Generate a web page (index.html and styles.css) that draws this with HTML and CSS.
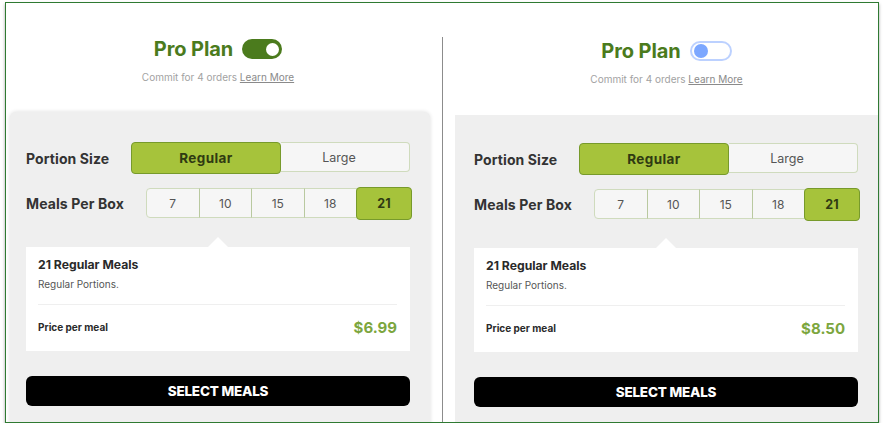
FILE: index.html
```html
<!DOCTYPE html>
<html lang="en">
<head>
<meta charset="utf-8">
<title>Pro Plan</title>
<link rel="stylesheet" href="styles.css">
</head>
<body>
<div class="frame">
  <section class="plan plan-left">
    <header class="plan-head">
      <div class="title-row">
        <h2 class="title">Pro Plan</h2>
        <span class="toggle toggle-on"><span class="knob"></span></span>
      </div>
      <p class="sub">Commit for 4 orders <a class="learn">Learn More</a></p>
    </header>
    <div class="card">
      <div class="opt-row">
        <span class="opt-label label-portion">Portion Size</span>
        <div class="seg seg-portion">
          <button class="seg-btn portion-reg sel">Regular</button>
          <button class="seg-btn portion-large">Large</button>
        </div>
      </div>
      <div class="opt-row row-meals">
        <span class="opt-label label-meals">Meals Per Box</span>
        <div class="seg seg-meals">
          <button class="meal-btn">7</button>
          <button class="meal-btn">10</button>
          <button class="meal-btn">15</button>
          <button class="meal-btn">18</button>
          <button class="meal-btn sel">21</button>
        </div>
      </div>
      <div class="info">
        <div class="info-title">21 Regular Meals</div>
        <div class="info-sub">Regular Portions.</div>
        <hr class="info-rule">
        <div class="price-row">
          <span class="price-label">Price per meal</span>
          <span class="price">$6.99</span>
        </div>
      </div>
      <button class="cta">SELECT MEALS</button>
    </div>
  </section>

  <section class="plan plan-right">
    <header class="plan-head">
      <div class="title-row">
        <h2 class="title">Pro Plan</h2>
        <span class="toggle toggle-off"><span class="knob"></span></span>
      </div>
      <p class="sub">Commit for 4 orders <a class="learn">Learn More</a></p>
    </header>
    <div class="card">
      <div class="opt-row">
        <span class="opt-label label-portion">Portion Size</span>
        <div class="seg seg-portion">
          <button class="seg-btn portion-reg sel">Regular</button>
          <button class="seg-btn portion-large">Large</button>
        </div>
      </div>
      <div class="opt-row row-meals">
        <span class="opt-label label-meals">Meals Per Box</span>
        <div class="seg seg-meals">
          <button class="meal-btn">7</button>
          <button class="meal-btn">10</button>
          <button class="meal-btn">15</button>
          <button class="meal-btn">18</button>
          <button class="meal-btn sel">21</button>
        </div>
      </div>
      <div class="info">
        <div class="info-title">21 Regular Meals</div>
        <div class="info-sub">Regular Portions.</div>
        <hr class="info-rule">
        <div class="price-row">
          <span class="price-label">Price per meal</span>
          <span class="price">$8.50</span>
        </div>
      </div>
      <button class="cta">SELECT MEALS</button>
    </div>
  </section>
</div>
</body>
</html>
```

FILE: styles.css
```css
* { box-sizing: border-box; }

html, body {
  margin: 0;
  padding: 0;
  background: #ffffff;
}

body {
  font-family: Inter, "Noto Sans", "Liberation Sans", sans-serif;
  color: #2b2b2b;
  overflow: hidden;
}

.frame {
  margin: 2px 0 0 5px;
  width: 874px;
  height: 421px;
  border: 1px solid #2f7a32;
  box-shadow: 0 2px 3px rgba(0, 0, 0, 0.35);
  background: #ffffff;
  display: flex;
  overflow: hidden;
}

.plan {
  display: flex;
  flex-direction: column;
}

.plan-left {
  width: 436px;
  flex: none;
}

.plan-right {
  flex: 1;
  margin-top: 34px;
  border-left: 1px solid #8c8c8c;
}

/* header */
.plan-head {
  text-align: center;
}

.plan-left .plan-head {
  padding: 32px 12px 0 0;
}

.plan-right .plan-head {
  padding: 0 0 0 12px;
}

.title-row {
  display: flex;
  justify-content: center;
  align-items: center;
  gap: 9px;
  height: 28px;
}

.title {
  margin: 0;
  font-size: 20px;
  font-weight: 700;
  color: #4b7b1d;
  letter-spacing: -0.1px;
}

.toggle {
  display: flex;
  align-items: center;
  width: 40px;
  height: 20px;
  border-radius: 10px;
  padding: 0 3px;
}

.toggle .knob {
  width: 13px;
  height: 13px;
  border-radius: 50%;
}

.toggle-on {
  background: #4b7b1d;
  justify-content: flex-end;
}

.toggle-on .knob {
  background: #ffffff;
}

.toggle-off {
  width: 42px;
  background: #ffffff;
  border: 2px solid #bcd1ff;
  justify-content: flex-start;
  padding: 0 2px;
}

.toggle-off .knob {
  background: #7ca7ff;
  width: 14px;
  height: 14px;
}

.sub {
  margin: 7px 0 0;
  height: 14px;
  line-height: 14px;
  font-size: 10px;
  color: #a2a2a2;
}

.learn {
  color: #8a8a8a;
  text-decoration: underline;
}

/* card */
.card {
  background: #efefef;
  display: flex;
  flex-direction: column;
  flex: 1;
}

.plan-left .card {
  margin: 28px 12px 0 4px;
  padding: 30px 20px 20px 16px;
  border-radius: 6px 6px 0 0;
  box-shadow: 0 0 4px rgba(0, 0, 0, 0.14);
}

.plan-right .card {
  margin: 29px 0 0 12px;
  padding: 28px 20px 20px 19px;
}

.opt-row {
  display: flex;
  align-items: center;
  height: 32px;
}

.row-meals {
  margin-top: 14px;
  height: 30px;
}

.opt-label {
  flex: none;
  font-size: 14px;
  font-weight: 700;
  color: #333333;
  letter-spacing: 0.1px;
}

.label-portion { width: 105px; }
.label-meals { width: 120px; }

.seg {
  flex: 1;
  display: flex;
  height: 100%;
}

button {
  font-family: inherit;
  cursor: pointer;
}

.seg-btn {
  height: 30px;
  border: 1px solid #cfdbbd;
  background: #f6f6f6;
  font-size: 12.5px;
  color: #555555;
}

.portion-reg {
  flex: 0 0 150px;
}

.portion-large {
  flex: 1;
  border-left: 0;
  border-radius: 0 4px 4px 0;
  padding: 0 12px 0 0;
}

.seg-btn.sel {
  height: 32px;
  background: #a6c33b;
  border: 1px solid #779a2b;
  border-radius: 4px;
  font-size: 13.5px;
  letter-spacing: 0.4px;
  font-weight: 700;
  color: #2f3a12;
}

.seg-meals {
  align-items: center;
}

.meal-btn {
  flex: 1;
  height: 30px;
  border: 1px solid #cfdbbd;
  border-left-color: #b9c9a0;
  background: #f6f6f6;
  font-size: 12px;
  color: #555555;
  padding: 0;
}

.meal-btn:first-child {
  border-left-color: #cfdbbd;
  border-radius: 4px 0 0 4px;
}

.meal-btn + .meal-btn {
  margin-left: -1px;
}

.meal-btn.sel {
  flex: 0 0 56px;
  height: 33px;
  margin-right: -2px;
  background: #a6c33b;
  border: 1px solid #779a2b;
  border-radius: 4px;
  font-size: 12.5px;
  font-weight: 700;
  color: #2f3a12;
  position: relative;
  z-index: 1;
}

/* info */
.info {
  position: relative;
  margin-top: 29px;
  background: #ffffff;
  padding: 10px 13px 14px 12px;
}

.info::before {
  content: "";
  position: absolute;
  left: 50%;
  top: -10px;
  margin-left: -10px;
  border-left: 10px solid transparent;
  border-right: 10px solid transparent;
  border-bottom: 10px solid #ffffff;
}

.info-title {
  height: 16px;
  line-height: 16px;
  font-size: 12.2px;
  font-weight: 700;
  color: #2a2a2a;
}

.info-sub {
  margin-top: 4px;
  height: 14px;
  line-height: 14px;
  font-size: 10px;
  color: #555555;
}

.info-rule {
  margin: 13px 0 0;
  border: 0;
  border-top: 1px solid #efefef;
}

.price-row {
  margin-top: 12px;
  height: 20px;
  display: flex;
  justify-content: space-between;
  align-items: center;
}

.price-label {
  font-size: 10px;
  font-weight: 700;
  color: #2a2a2a;
}

.price {
  font-size: 15px;
  font-weight: 700;
  color: #7ca63e;
}

.cta {
  margin-top: 25px;
  height: 30px;
  width: 100%;
  flex: none;
  border: 0;
  border-radius: 6px;
  background: #000000;
  color: #ffffff;
  font-size: 13.5px;
  font-weight: 800;
  letter-spacing: -0.2px;
}
```
